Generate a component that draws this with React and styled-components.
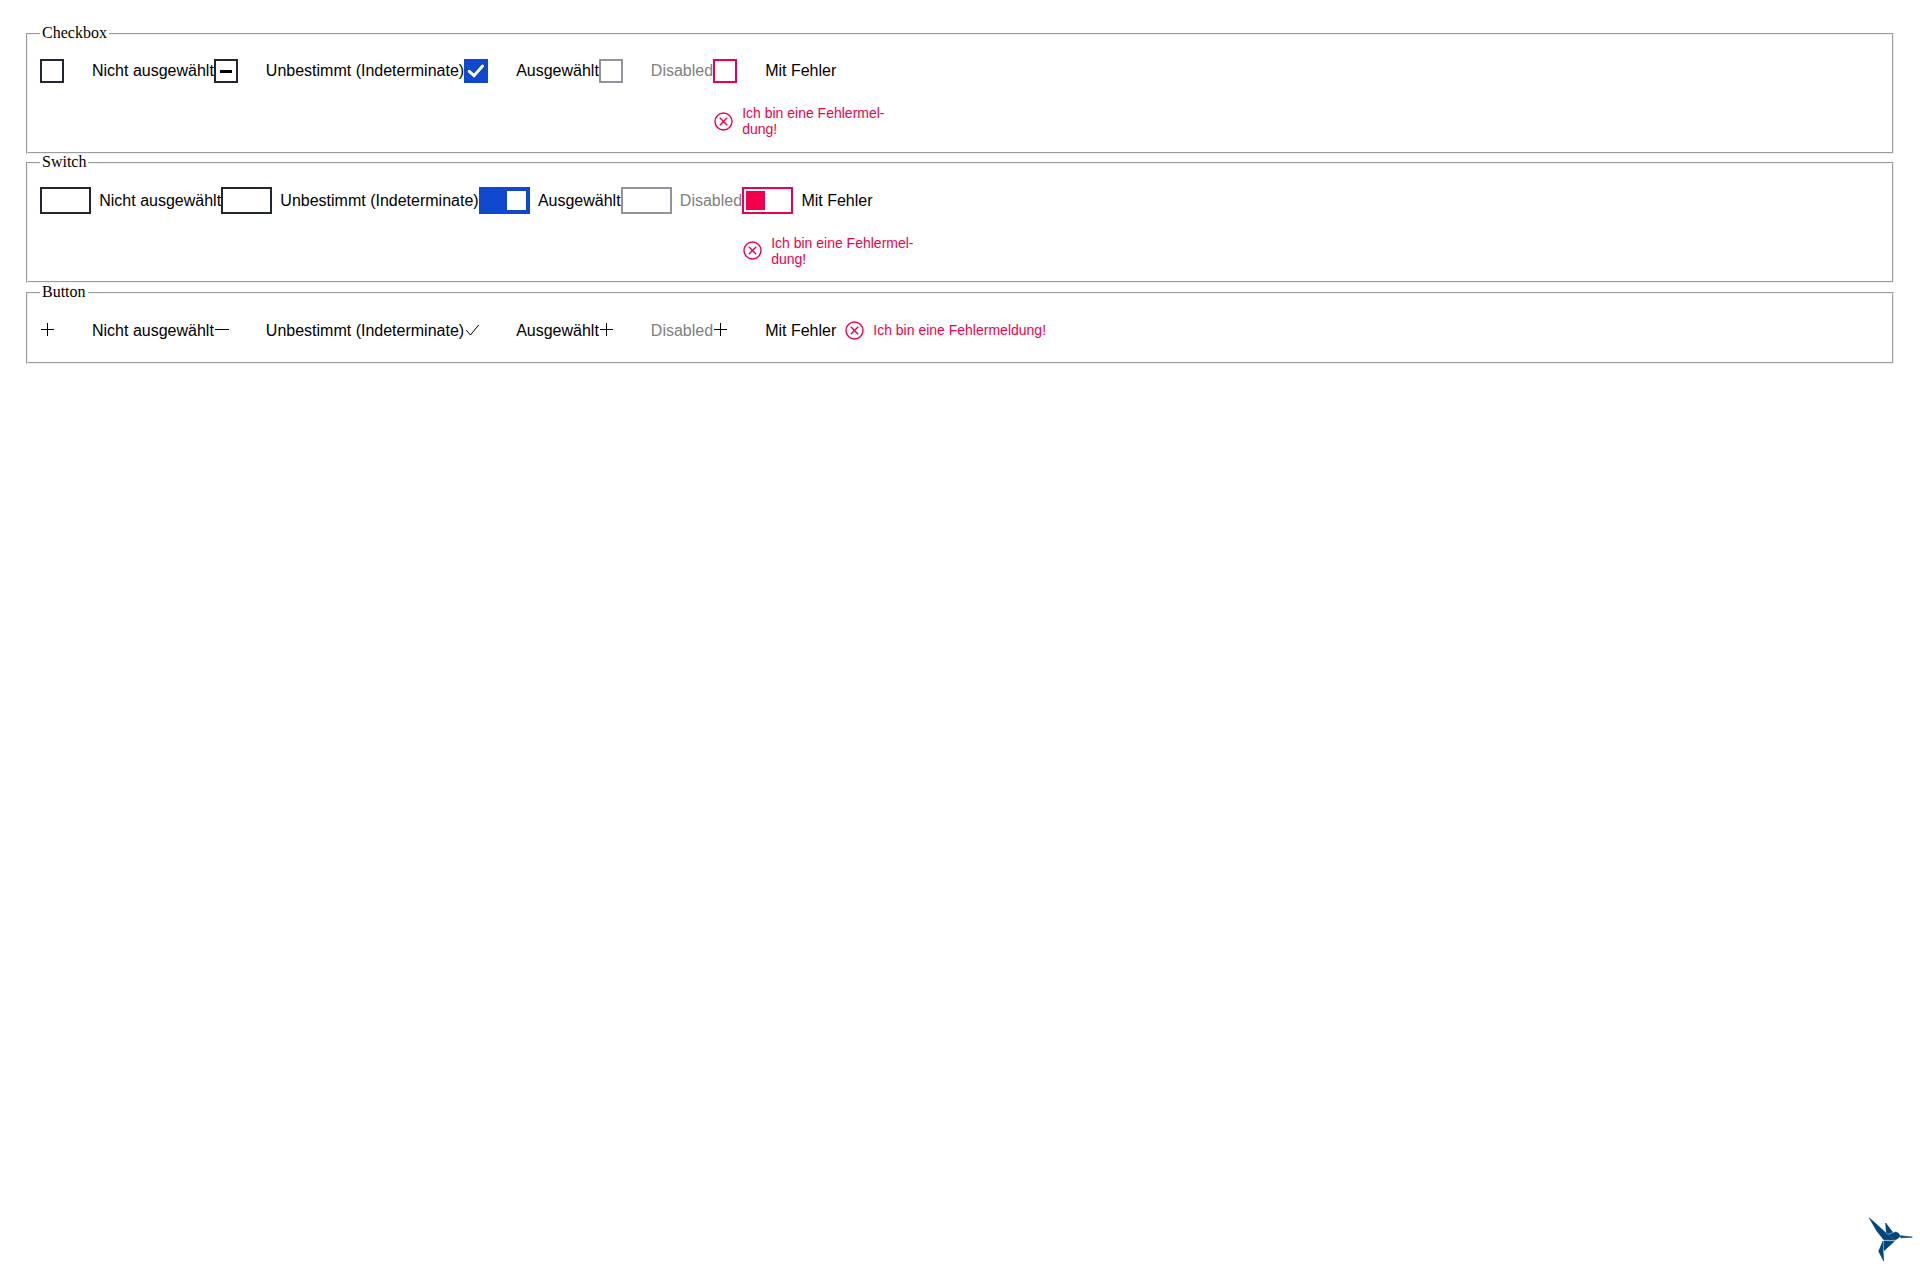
import React from "react";
import styled, { createGlobalStyle } from "styled-components";

const Global = createGlobalStyle`
  body { margin: 0; background: #fff; color: #000; font-size: 16px; font-family: "Liberation Serif", "Times New Roman", serif; }
`;

const Page = styled.main`
  box-sizing: border-box;
  display: flex;
  flex-direction: column;
  min-height: 1280px;
  padding: 24px 26px 0;
`;

const Group = styled.fieldset`
  box-sizing: border-box;
  height: ${(p) => p.$height}px;
  margin: 0 0 ${(p) => p.$after || 0}px;
  padding: ${(p) => p.$top}px 12px 0;
  border: 2px groove rgb(240, 240, 240);
  min-width: 0;
`;

const Legend = styled.legend`
  padding: 0 2px 2px;
  line-height: 18px;
`;

const Row = styled.div`
  display: flex;
  align-items: flex-start;
  font-family: "Liberation Sans", Arial, sans-serif;
`;

const Field = styled.div`
  display: flex;
  flex-direction: ${(p) => (p.$inline ? "row" : "column")};
  align-items: ${(p) => (p.$inline ? "center" : "flex-start")};
`;

const Label = styled.label`
  display: flex;
  align-items: center;
  gap: ${(p) => p.$gap}px;
  height: ${(p) => p.$line}px;
  line-height: 18px;
  white-space: nowrap;
`;

const LabelText = styled.span`
  color: ${(p) => (p.$disabled ? "#808080" : "#000")};
`;

const tone = (s) =>
  s === "error" ? "#f0004b" : s === "checked" ? "#0f47cd" : s === "disabled" ? "#90949c" : "#202637";

const Box = styled.span`
  box-sizing: border-box;
  display: flex;
  width: 24px;
  height: 24px;
  border: 2px solid ${(p) => tone(p.$state)};
  background: ${(p) => (p.$state === "checked" ? tone("checked") : "#fff")};
`;

const Track = styled.span`
  box-sizing: border-box;
  display: flex;
  justify-content: ${(p) => (p.$state === "checked" ? "flex-end" : "flex-start")};
  width: 51px;
  height: 27px;
  padding: 2px;
  border: 2px solid ${(p) => tone(p.$state)};
  background: ${(p) => (p.$state === "checked" ? tone("checked") : "#fff")};
`;

const Knob = styled.span`
  width: 19px;
  height: 19px;
  background: ${(p) => (p.$state === "error" ? tone("error") : "#fff")};
`;

const Glyph = styled.svg`
  display: block;
  width: 24px;
  height: 25px;
`;

const Message = styled.div`
  display: flex;
  align-items: center;
  gap: 9px;
  padding-left: 1px;
  margin-top: ${(p) => (p.$inline ? 0 : p.$space)}px;
  margin-left: ${(p) => (p.$inline ? 8 : 0)}px;
  color: #f0004b;
  font-size: 14px;
  line-height: 16px;
  white-space: nowrap;
`;

const MessageText = styled.span`
  padding-bottom: ${(p) => (p.$inline ? 2 : 0)}px;
`;

const ErrorGlyph = styled.svg`
  display: block;
  width: 19px;
  height: 19px;
  margin-bottom: ${(p) => p.$lift || 0}px;
`;

const Logo = styled.svg`
  position: fixed;
  right: 0;
  bottom: 0;
  width: 70px;
  height: 80px;
`;

const ITEMS = [
  { text: "Nicht ausgewählt", state: "off" },
  { text: "Unbestimmt (Indeterminate)", state: "mixed" },
  { text: "Ausgewählt", state: "checked" },
  { text: "Disabled", state: "disabled" },
  { text: "Mit Fehler", state: "error" },
];

function CheckControl({ state }) {
  return (
    <Box $state={state}>
      {state === "mixed" && (
        <svg width="20" height="20"><path d="M4 9h12v3H4z" fill="#000" /></svg>
      )}
      {state === "checked" && (
        <svg width="20" height="20">
          <path d="M3.2 10.4 8 14.6 16.6 5" fill="none" stroke="#fff" strokeWidth="2.9" strokeLinecap="round" />
        </svg>
      )}
    </Box>
  );
}

function SwitchControl({ state }) {
  return (
    <Track $state={state}>
      <Knob $state={state} />
    </Track>
  );
}

function ButtonControl({ state }) {
  const d =
    state === "mixed"
      ? "M1 11.5H15"
      : state === "checked"
        ? "M2.3 12.2 6.4 17 14.7 7"
        : "M1 11.5H14M7.5 5V18";
  return (
    <Glyph viewBox="0 0 24 25">
      <path d={d} fill="none" stroke="#000" strokeWidth="1" />
    </Glyph>
  );
}

function ErrorMessage({ inline, lift, space }) {
  return (
    <Message $inline={inline} $space={space}>
      <ErrorGlyph $lift={lift} viewBox="0 0 19 19" fill="none" stroke="#f0004b" strokeWidth="1.4">
        <circle cx="9.5" cy="9.5" r="8.5" />
        <path d="M5.8 5.8 13.2 13.2M13.2 5.8 5.8 13.2" />
      </ErrorGlyph>
      {inline ? (
        <MessageText $inline>Ich bin eine Fehlermeldung!</MessageText>
      ) : (
        <MessageText>
          Ich bin eine Fehlermel-
          <br />
          dung!
        </MessageText>
      )}
    </Message>
  );
}

function Section({ title, height, after, top, gap, line = 27, control: Control, inline, lift, space }) {
  return (
    <Group $height={height} $after={after} $top={top}>
      <Legend>{title}</Legend>
      <Row>
        {ITEMS.map(({ text, state }) => (
          <Field key={state} $inline={inline}>
            <Label $gap={gap} $line={line}>
              <Control state={state} />
              <LabelText $disabled={state === "disabled"}>{text}</LabelText>
            </Label>
            {state === "error" && <ErrorMessage inline={inline} lift={lift} space={space} />}
          </Field>
        ))}
      </Row>
    </Group>
  );
}

export default function App() {
  return (
    <>
      <Global />
      <Page>
        <Section title="Checkbox" height={130} after={-1} top={13} gap={28} line={28} space={20} control={CheckControl} />
        <Section title="Switch" height={130} top={14} gap={8.25} space={21} control={SwitchControl} lift={1} />
        <Section title="Button" height={81} top={14} gap={28} control={ButtonControl} inline />
      </Page>
      <Logo viewBox="0 0 210 240" fill="#00457c" stroke="#00457c" strokeWidth="2" strokeLinejoin="round">
        <path d="M58 54 82 75 110 101 134 120 101 119 80 92Z" />
        <path d="M107 69 128 97 113 101 109 97Z" />
        <path d="M115 104 130 99 137 96 143 98 150 106 149 111 136 120Z" />
        <path d="M152 107 187 111.5 152 113.5Z" />
        <path d="M102 123 133 124 102 152Z" />
        <path d="M99 123 99 152 101 183 86 154Z" />
      </Logo>
    </>
  );
}
